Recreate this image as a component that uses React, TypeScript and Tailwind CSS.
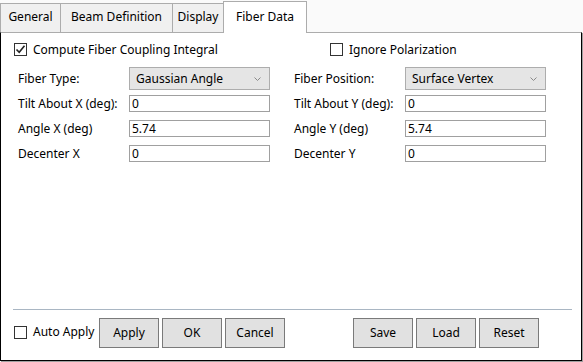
import React from 'react';

const font = { fontFamily: '"Noto Sans", "Open Sans", sans-serif' };

const Tab = ({ label, width, active }: { label: string; width: string; active?: boolean }) => (
    <div
        className={
            active
                ? `${width} h-[32px] -ml-px bg-white border border-b-0 border-[#acacac] flex items-start justify-center pt-[6px] relative z-10 -mb-px`
                : `${width} h-[29px] -ml-px first:ml-0 bg-[#f0f0f0] border border-b-0 border-[#acacac] flex items-start justify-center pt-[4px]`
        }
    >
        {label}
    </div>
);

const CheckBox = ({ checked }: { checked?: boolean }) => (
    <div className="w-[13px] h-[13px] border border-[#333333] bg-white flex items-center justify-center shrink-0">
        {checked && (
            <svg width="11" height="11" viewBox="0 0 11 11">
                <path d="M1.5 5.5 L4.2 8.3 L9.5 1.8" fill="none" stroke="#222222" strokeWidth="1.6" />
            </svg>
        )}
    </div>
);

const Select = ({ value }: { value: string }) => (
    <div className="w-[141px] h-[23px] bg-[#e5e5e5] border border-[#adadad] flex items-center justify-between pl-[6px] pr-[8px]">
        <span>{value}</span>
        <svg width="7" height="4" viewBox="0 0 7 4">
            <path d="M0.5 0.5 L3.5 3.5 L6.5 0.5" fill="none" stroke="#8a8a8a" strokeWidth="1" />
        </svg>
    </div>
);

const Input = ({ value }: { value: string }) => (
    <div className="w-[141px] h-[17px] bg-white border border-[#a0a0a0] flex items-center pl-[2px] leading-none">
        {value}
    </div>
);

const Field = ({ label, children, tall }: { label: string; children: React.ReactNode; tall?: boolean }) => (
    <div className={tall ? 'flex items-center w-[276px] h-[23px]' : 'flex items-center w-[276px] h-[17px]'}>
        <div className="w-[111px] shrink-0">{label}</div>
        {children}
    </div>
);

const Btn = ({ label }: { label: string }) => (
    <div className="w-[60px] h-[30px] bg-[#e1e1e1] border border-[#7a7a7a] flex items-center justify-center">
        {label}
    </div>
);

export default function App() {
    return (
        <div className="w-[583px] h-[362px] bg-[#fafafa] flex flex-col text-[12px] text-black" style={font}>
            <div className="h-[32px] flex items-end">
                <Tab label="General" width="w-[61px]" />
                <Tab label="Beam Definition" width="w-[113px]" />
                <Tab label="Display" width="w-[52px]" />
                <Tab label="Fiber Data" width="w-[84px]" active />
            </div>
            <div className="w-[582px] h-[329px] bg-white border border-black border-t-[#acacac] shadow-[1px_1px_0_#a0a0a0] flex flex-col">
                <div className="pl-[13px] pt-[10px]">
                    <div className="flex items-center h-[13px]">
                        <div className="flex items-center gap-[6px] w-[316px]">
                            <CheckBox checked />
                            <span>Compute Fiber Coupling Integral</span>
                        </div>
                        <div className="flex items-center gap-[6px]">
                            <CheckBox />
                            <span>Ignore Polarization</span>
                        </div>
                    </div>
                    <div className="pl-[4px] flex flex-col">
                        <div className="flex mt-[11px]">
                            <Field label="Fiber Type:" tall><Select value="Gaussian Angle" /></Field>
                            <Field label="Fiber Position:" tall><Select value="Surface Vertex" /></Field>
                        </div>
                        <div className="flex mt-[5px]">
                            <Field label="Tilt About X (deg):"><Input value="0" /></Field>
                            <Field label="Tilt About Y (deg):"><Input value="0" /></Field>
                        </div>
                        <div className="flex mt-[8px]">
                            <Field label="Angle X (deg)"><Input value="5.74" /></Field>
                            <Field label="Angle Y (deg)"><Input value="5.74" /></Field>
                        </div>
                        <div className="flex mt-[8px]">
                            <Field label="Decenter X"><Input value="0" /></Field>
                            <Field label="Decenter Y"><Input value="0" /></Field>
                        </div>
                    </div>
                </div>
                <div className="mt-auto pb-[12px]">
                    <div className="ml-[12px] w-[559px] h-px bg-[#a9b6c3]" />
                    <div className="flex items-center mt-[8px] pl-[13px]">
                        <div className="flex items-center gap-[6px] w-[85px] -mt-[2px]">
                            <CheckBox />
                            <span>Auto Apply</span>
                        </div>
                        <div className="flex gap-[3px]">
                            <Btn label="Apply" />
                            <Btn label="OK" />
                            <Btn label="Cancel" />
                        </div>
                        <div className="flex gap-[3px] ml-[68px]">
                            <Btn label="Save" />
                            <Btn label="Load" />
                            <Btn label="Reset" />
                        </div>
                    </div>
                </div>
            </div>
        </div>
    );
}
